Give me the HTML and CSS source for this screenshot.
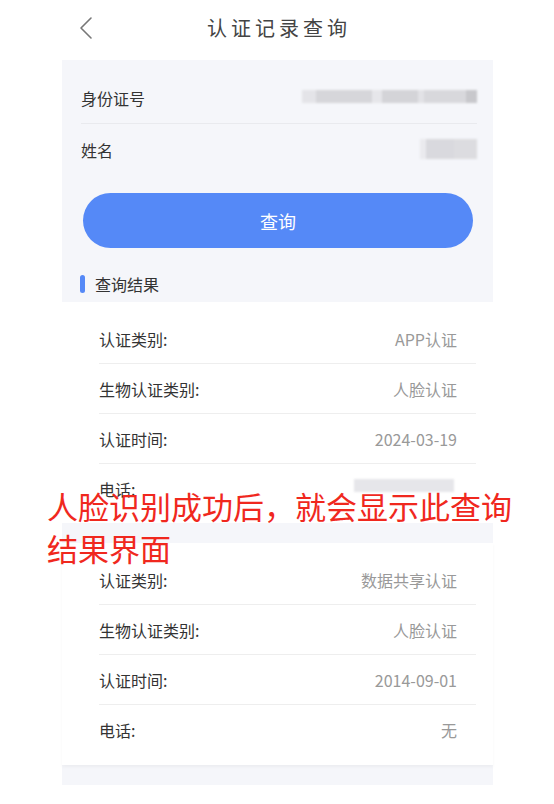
FILE: index.html
```html
<!DOCTYPE html>
<html lang="zh-CN">
<head>
    <meta charset="UTF-8">
    <meta name="viewport" content="width=device-width, initial-scale=1.0">
    <title>认证记录查询</title>
    <link rel="stylesheet" href="styles.css">
</head>
<body>

    <!-- Top bar -->
    <div class="topbar">
        <div class="back">
            <svg width="14" height="24" viewBox="0 0 14 24">
                <path d="M12 2 L2 12 L12 22" fill="none" stroke="#777" stroke-width="1.6" stroke-linecap="round" stroke-linejoin="round"/>
            </svg>
        </div>
        <div class="title">认证记录查询</div>
        <div></div>
    </div>

    <div class="page">
        <!-- Query form -->
        <div class="form">
            <div class="form-row">
                <span class="form-label">身份证号</span>
                <span class="mask mask-id"></span>
            </div>
            <div class="form-row last">
                <span class="form-label">姓名</span>
                <span class="mask mask-name"></span>
            </div>
            <button class="query-btn">查询</button>
        </div>

        <div class="section-title">
            <span class="section-bar"></span>
            <span>查询结果</span>
        </div>

        <!-- Results -->
        <div class="record">
            <div class="record-row"><span>认证类别:</span><span class="value">APP认证</span></div>
            <div class="record-row"><span>生物认证类别:</span><span class="value">人脸认证</span></div>
            <div class="record-row"><span>认证时间:</span><span class="value">2024-03-19</span></div>
            <div class="record-row last"><span>电话:</span><span class="mask mask-phone"></span></div>
        </div>

        <div class="record">
            <div class="record-row"><span>认证类别:</span><span class="value">数据共享认证</span></div>
            <div class="record-row"><span>生物认证类别:</span><span class="value">人脸认证</span></div>
            <div class="record-row"><span>认证时间:</span><span class="value">2014-09-01</span></div>
            <div class="record-row last"><span>电话:</span><span class="value">无</span></div>
        </div>
    </div>

    <!-- annotation over the screenshot -->
    <div class="note">人脸识别成功后，就会显示此查询<br>结果界面</div>

</body>
</html>
```

FILE: styles.css
```css
body {
    margin: 0;
    padding: 0;
    background-color: #fff;
    font-family: "Noto Sans CJK SC", "Noto Sans", sans-serif;
    color: #333;
    position: relative;
}
.topbar {
    height: 60px;
    display: grid;
    grid-template-columns: 1fr auto 1fr;
    align-items: center;
}
.back {
    padding-left: 79px;
    padding-bottom: 5px;
    display: flex;
    align-items: center;
}
.title {
    font-size: 20px;
    letter-spacing: 4px;
    margin-right: -4px;
    color: #444;
    padding-bottom: 5px;
}
.page {
    margin: 0 61px 0 62px;
    background-color: #f5f6fa;
    padding-bottom: 20px;
}
.form {
    padding: 12px 16px 0 19px;
}
.form-row {
    height: 51px;
    display: flex;
    align-items: center;
    justify-content: space-between;
    border-bottom: 1px solid #e9eaee;
}
.form-row.last {
    border-bottom: none;
}
.form-label {
    font-size: 16px;
    color: #333;
}
.mask {
    display: inline-block;
    filter: blur(1.2px);
}
.mask-id {
    width: 175px;
    height: 13px;
    margin-top: -2px;
    background: linear-gradient(90deg, #e4e4e8 0 8%, #d6d6da 8% 40%, #e6e6ea 40% 46%, #d4d4d8 46% 66%, #e2e2e6 66% 70%, #d8d8dc 70% 94%, #c8c8cc 94% 100%);
}
.mask-name {
    width: 57px;
    height: 20px;
    margin-top: -2px;
    background: linear-gradient(90deg, #eaeaee 0 10%, #d9d9de 10% 60%, #dcdce0 60% 100%);
}
.mask-phone {
    width: 100px;
    height: 13px;
    margin-right: 3px;
    margin-top: -8px;
    background-color: #e6e6ea;
}
.query-btn {
    display: block;
    width: 390px;
    height: 55px;
    margin: 18px 0 0 2px;
    border: none;
    border-radius: 28px;
    background-color: #5589f7;
    color: #fff;
    font-family: "Noto Sans CJK SC", sans-serif;
    font-size: 18px;
    cursor: pointer;
}
.section-title {
    display: flex;
    align-items: center;
    gap: 10px;
    padding: 27px 0 9px 18px;
    font-size: 16px;
    line-height: 18px;
    color: #333;
}
.section-bar {
    width: 5px;
    height: 18px;
    border-radius: 3px;
    background-color: #5589f7;
}
.record {
    background-color: #fff;
    padding: 12px 17px 9px 37px;
    margin-bottom: 20px;
}
.record:last-child {
    margin-bottom: 0;
    padding-bottom: 10px;
    box-shadow: 0 2px 3px rgba(0, 0, 0, 0.04);
}
.record-row {
    height: 50px;
    box-sizing: border-box;
    display: flex;
    align-items: center;
    justify-content: space-between;
    padding-right: 19px;
    border-bottom: 1px solid #eeeeee;
    font-size: 16px;
    color: #333;
}
.record-row.last {
    border-bottom: none;
}
.value {
    color: #999;
    font-size: 16px;
}
.note {
    position: absolute;
    left: 47px;
    top: 485px;
    font-size: 31px;
    line-height: 42px;
    color: #f0281e;
    white-space: nowrap;
}
```
